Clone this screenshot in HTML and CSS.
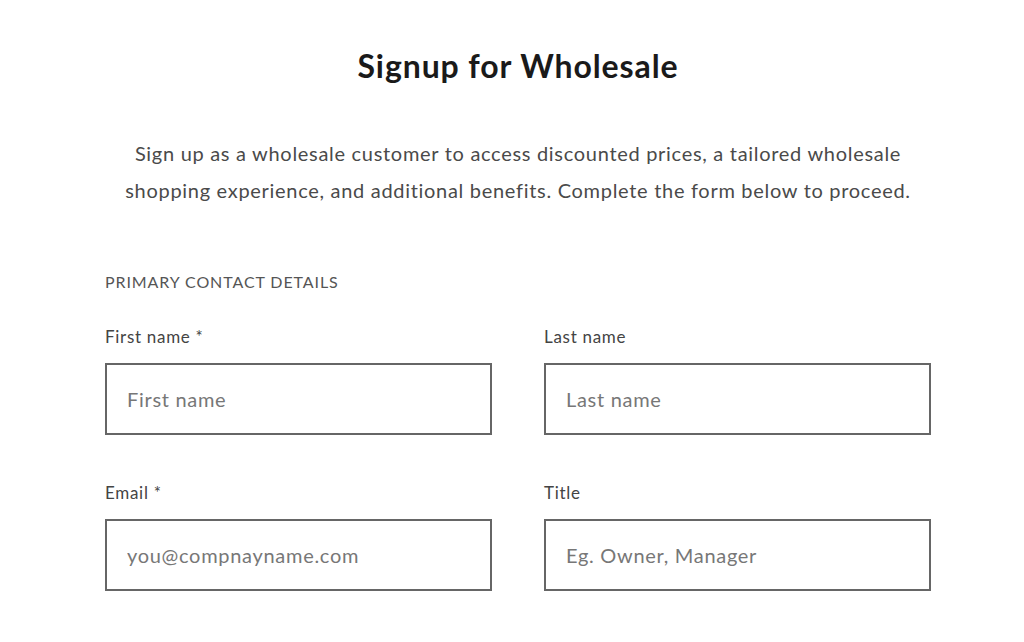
FILE: index.html
```html
<!DOCTYPE html>
<html lang="en">
<head>
  <meta charset="UTF-8">
  <title>Signup for Wholesale</title>
  <link rel="stylesheet" href="styles.css">
</head>
<body>
  <div class="container">
    <!-- HEADER -->
    <h1 class="title">Signup for Wholesale</h1>
    <p class="intro">Sign up as a wholesale customer to access discounted prices, a tailored wholesale<br>shopping experience, and additional benefits. Complete the form below to proceed.</p>
    <!-- FORM -->
    <form class="form">
      <h3 class="section">PRIMARY CONTACT DETAILS</h3>
      <div class="row">
        <div class="field">
          <label for="fname">First name *</label>
          <input type="text" id="fname" placeholder="First name">
        </div>
        <div class="field">
          <label for="lname">Last name</label>
          <input type="text" id="lname" placeholder="Last name">
        </div>
      </div>
      <div class="row">
        <div class="field">
          <label for="email">Email *</label>
          <input type="email" id="email" placeholder="you@compnayname.com">
        </div>
        <div class="field">
          <label for="title">Title</label>
          <input type="text" id="title" placeholder="Eg. Owner, Manager">
        </div>
      </div>
    </form>
  </div>
</body>
</html>
```

FILE: styles.css
```css
*{
  padding: 0;
  margin: 0;
  box-sizing: border-box;
  font-family: Lato, "Open Sans", sans-serif;
}
body {
  background: #fff;
  color: #222;
}
.container {
  width: 826px;
  margin-left: 105px;
  padding-top: 46px;
}
.title {
  text-align: center;
  font-size: 32px;
  font-weight: 700;
  line-height: 40px;
  color: #1a1a1a;
  letter-spacing: 0.9px;
}
.intro {
  margin-top: 49px;
  text-align: center;
  font-size: 20px;
  line-height: 37px;
  color: #4a4a4a;
  letter-spacing: 0.7px;
  white-space: nowrap;
}
.section {
  margin-top: 61px;
  font-size: 16px;
  font-weight: 400;
  line-height: 24px;
  color: #555;
  letter-spacing: 0.9px;
}
.row {
  display: flex;
  gap: 52px;
  margin-top: 33px;
}
.row + .row {
  margin-top: 48px;
}
.field {
  flex: 1;
  display: flex;
  flex-direction: column;
}
.field label {
  font-size: 17px;
  line-height: 20px;
  color: #444;
  letter-spacing: 0.7px;
  margin-bottom: 16px;
}
.field input {
  height: 72px;
  border: 2px solid #666;
  border-radius: 0;
  padding: 0 20px;
  font-size: 20px;
  color: #333;
  letter-spacing: 0.7px;
  outline: none;
  background: #fff;
}
.field input::placeholder {
  color: #777;
}
```
